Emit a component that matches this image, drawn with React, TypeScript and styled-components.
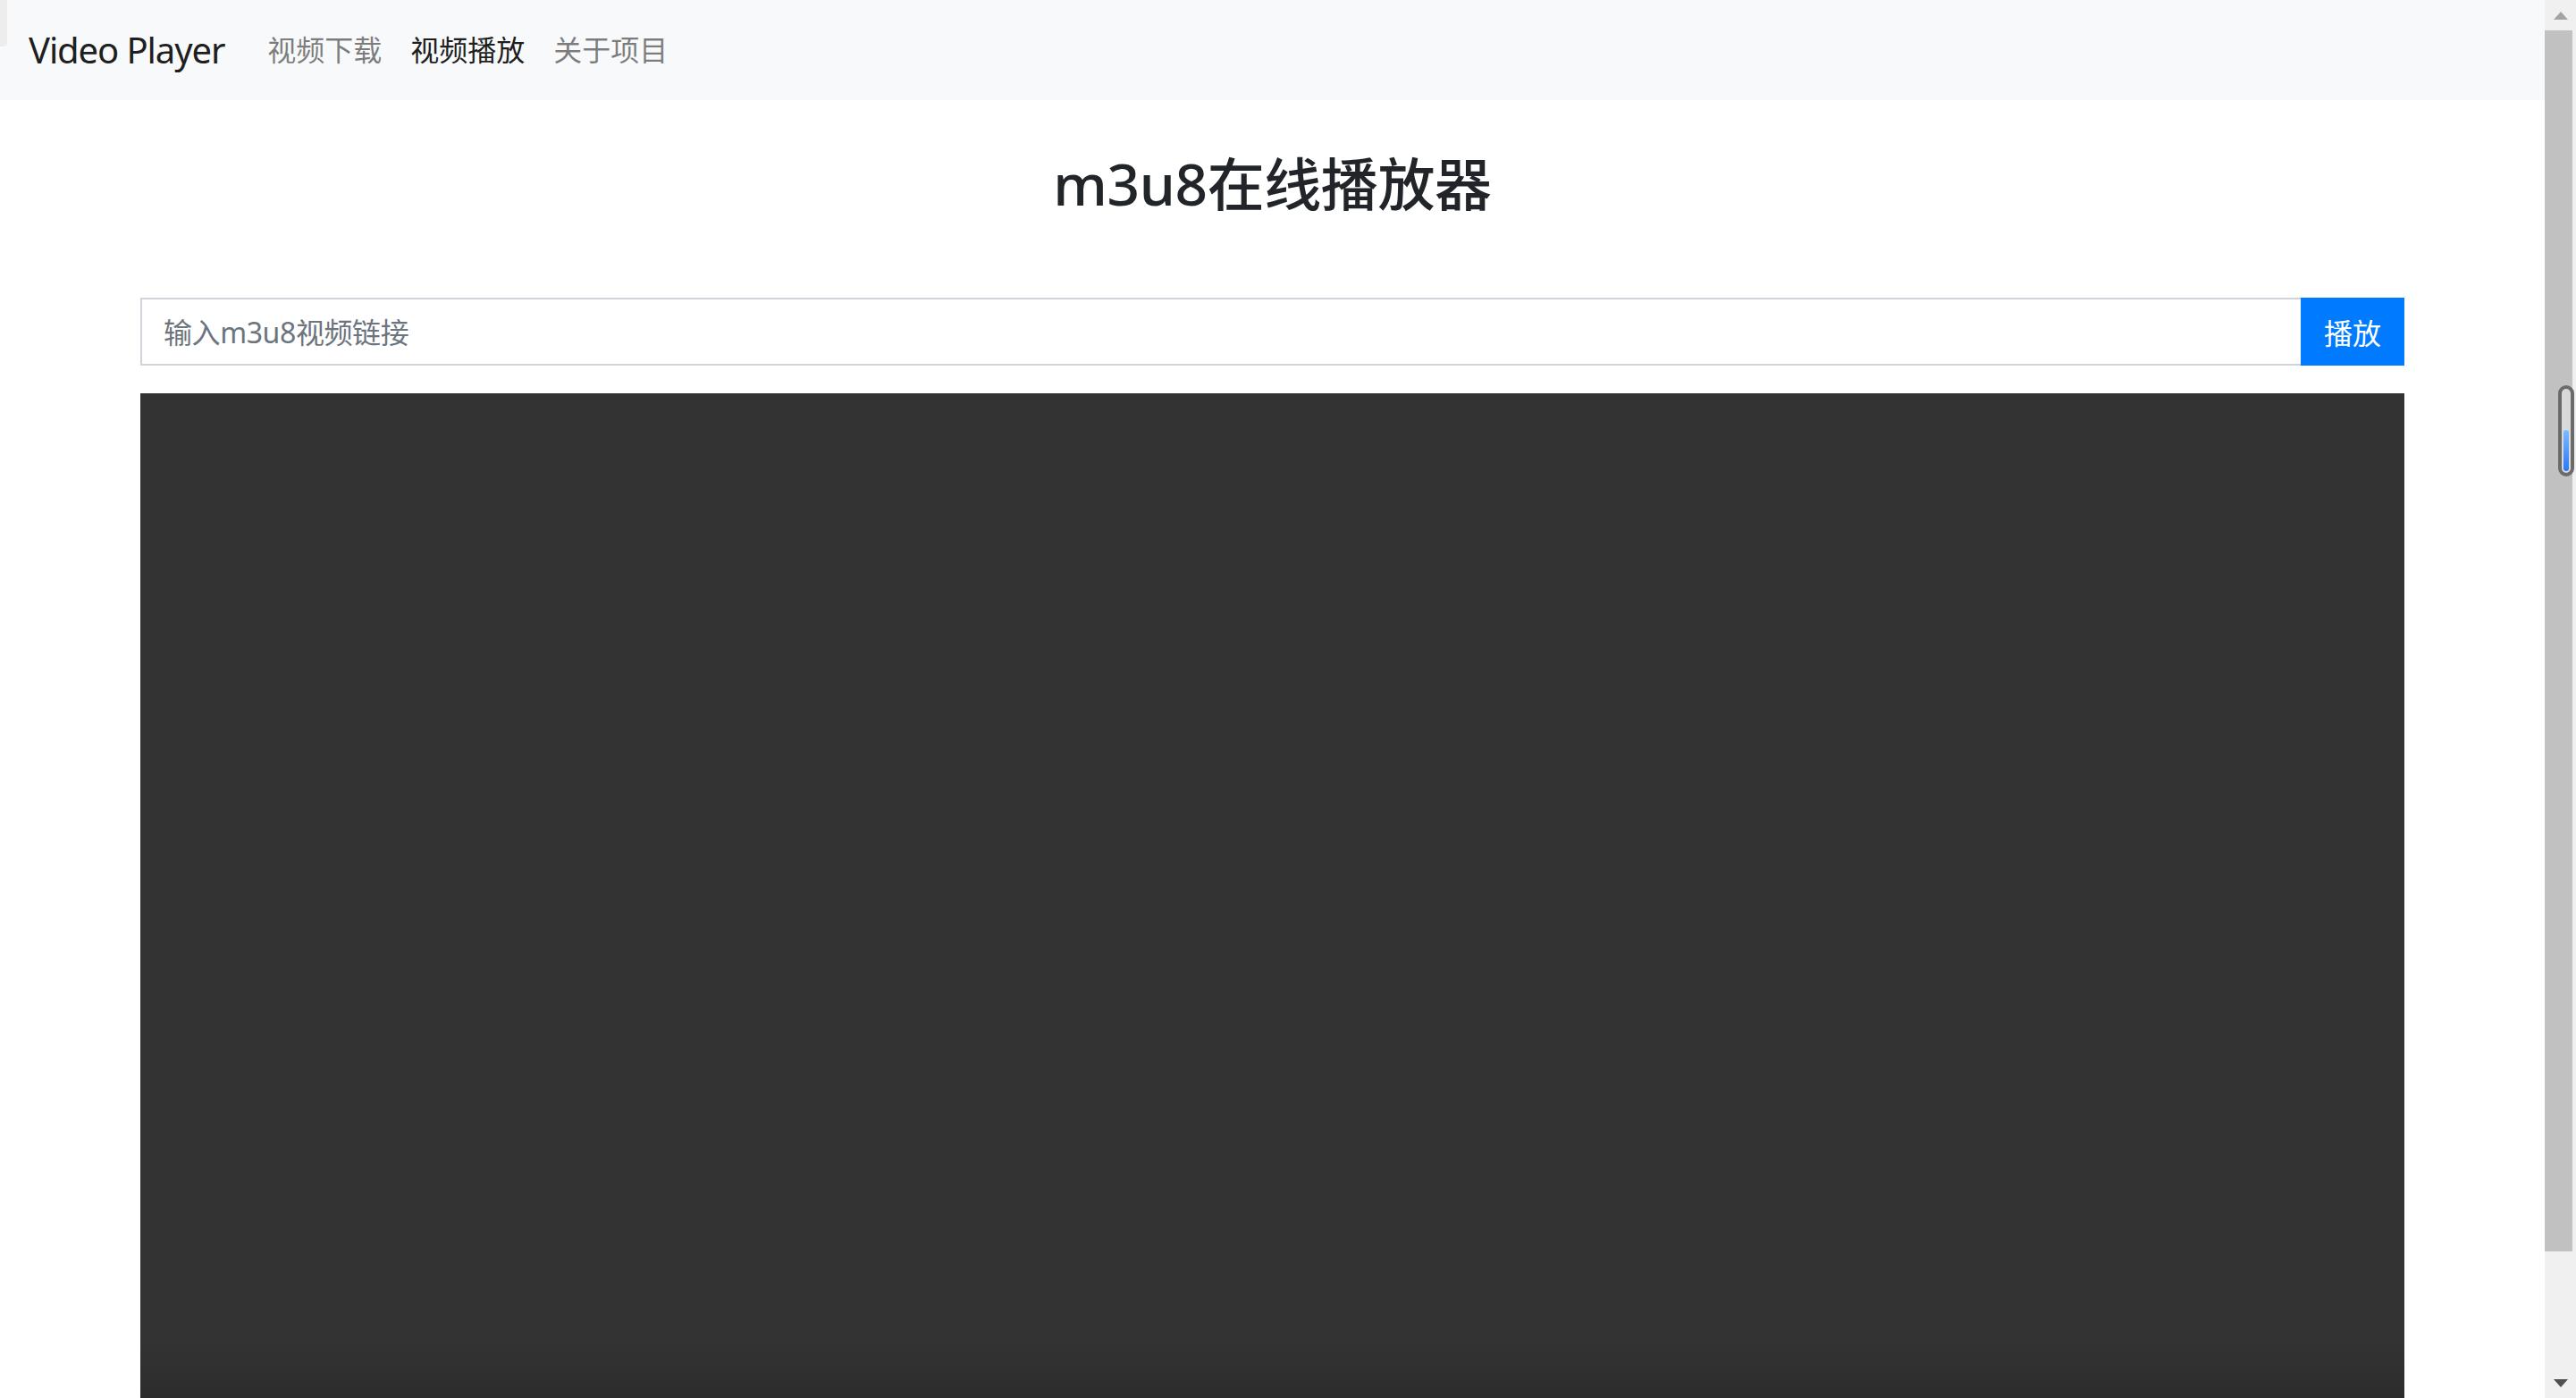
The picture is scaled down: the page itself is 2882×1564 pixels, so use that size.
import * as React from 'react';
import styled, { createGlobalStyle } from 'styled-components';

const GlobalStyle = createGlobalStyle`
  html, body {
    margin: 0;
    padding: 0;
    height: 100%;
    overflow: hidden;
    background: #fff;
  }
  body {
    font-family: "Noto Sans", "Noto Sans CJK SC", sans-serif;
    color: #212529;
  }
  * {
    box-sizing: border-box;
  }
`;

const Page = styled.div`
  display: flex;
  width: 100vw;
  height: 100vh;
  position: relative;
`;

const Main = styled.div`
  flex: 1;
  height: 100%;
  overflow: hidden;
`;

const Navbar = styled.nav`
  display: flex;
  align-items: center;
  height: 112px;
  padding: 16px 32px;
  background: #f8f9fa;
`;

const Brand = styled.a`
  font-size: 40px;
  line-height: 60px;
  letter-spacing: -1.1px;
  margin-right: 32px;
  color: rgba(0, 0, 0, 0.9);
  text-decoration: none;
  white-space: nowrap;
`;

const NavList = styled.ul`
  display: flex;
  list-style: none;
  margin: 0;
  padding: 0;
`;

const NavLink = styled.a<{ $active?: boolean }>`
  display: block;
  padding: 8px 16px;
  font-size: 32px;
  line-height: 48px;
  color: ${p => (p.$active ? 'rgba(0, 0, 0, 0.9)' : 'rgba(0, 0, 0, 0.5)')};
  text-decoration: none;
`;

const Container = styled.div`
  padding: 55px 157px 0;
`;

const Title = styled.h2`
  margin: 0 0 89px;
  text-align: center;
  font-size: 64px;
  line-height: 77px;
  font-weight: 500;
  letter-spacing: -0.4px;
  color: #212529;
`;

const InputGroup = styled.div`
  display: flex;
  height: 76px;
`;

const UrlInput = styled.input`
  flex: 1;
  height: 76px;
  padding: 12px 24px;
  border: 2px solid #ced4da;
  border-right: none;
  border-radius: 0;
  font-family: inherit;
  font-size: 32px;
  color: #495057;
  outline: none;

  &::placeholder {
    color: #6c757d;
    letter-spacing: -0.4px;
  }
`;

const PlayButton = styled.button`
  width: 116px;
  height: 76px;
  border: 2px solid #007bff;
  border-radius: 0;
  background: #007bff;
  color: #fff;
  font-family: inherit;
  font-size: 32px;
  padding: 0 24px;
`;

const Player = styled.div`
  position: relative;
  margin-top: 31px;
  height: 1256px;
  background: #333;
`;

const ControllerMask = styled.div`
  position: absolute;
  left: 0;
  right: 0;
  bottom: 0;
  height: 196px;
  background: linear-gradient(to bottom, rgba(0, 0, 0, 0), rgba(0, 0, 0, 0.4));
`;

const Scrollbar = styled.div`
  position: relative;
  display: flex;
  flex-direction: column;
  width: 35px;
  height: 100%;
  background: #f0f0f0;
`;

const ScrollButton = styled.div`
  display: flex;
  justify-content: center;
  align-items: center;
  height: 34px;
`;

const Track = styled.div`
  flex: 1;
  display: flex;
  flex-direction: column;
`;

const Thumb = styled.div`
  height: 1366px;
  margin-right: 4px;
  background: #c1c1c1;
`;

const Pill = styled.svg`
  position: absolute;
  left: 15px;
  top: 431px;
`;

const CornerTab = styled.div`
  position: absolute;
  left: 0;
  top: 0;
  width: 8px;
  height: 52px;
  background: #ededed;
  border-bottom-right-radius: 4px;
`;

function Arrow({ up, color }: { up?: boolean; color: string }) {
  return (
    <svg width="16" height="9" viewBox="0 0 16 9">
      <path d={up ? 'M0 9 L8 0 L16 9 Z' : 'M0 0 L16 0 L8 9 Z'} fill={color} />
    </svg>
  );
}

export default function App() {
  const [url, setUrl] = React.useState('');

  return (
    <>
      <GlobalStyle />
      <Page>
        <Main>
          <Navbar>
            <Brand href="#">Video Player</Brand>
            <NavList>
              <li>
                <NavLink href="#">视频下载</NavLink>
              </li>
              <li>
                <NavLink href="#" $active>
                  视频播放
                </NavLink>
              </li>
              <li>
                <NavLink href="#">关于项目</NavLink>
              </li>
            </NavList>
          </Navbar>
          <Container>
            <Title>m3u8在线播放器</Title>
            <InputGroup>
              <UrlInput
                placeholder="输入m3u8视频链接"
                value={url}
                onChange={e => setUrl(e.target.value)}
              />
              <PlayButton>播放</PlayButton>
            </InputGroup>
            <Player>
              <ControllerMask />
            </Player>
          </Container>
        </Main>
        <Scrollbar>
          <ScrollButton>
            <Arrow up color="#a3a3a3" />
          </ScrollButton>
          <Track>
            <Thumb />
          </Track>
          <ScrollButton>
            <Arrow color="#505050" />
          </ScrollButton>
          <Pill width="18" height="102" viewBox="0 0 18 102">
            <defs>
              <linearGradient id="pillFill" x1="0" y1="0" x2="0" y2="1">
                <stop offset="0" stopColor="#7dbcff" />
                <stop offset="1" stopColor="#2a78f5" />
              </linearGradient>
            </defs>
            <rect x="2" y="2" width="14" height="98" rx="7" fill="#d9d9d9" stroke="#6b6b6b" strokeWidth="4" />
            <rect x="6" y="50" width="6" height="46" rx="3" fill="url(#pillFill)" />
          </Pill>
        </Scrollbar>
        <CornerTab />
      </Page>
    </>
  );
}
